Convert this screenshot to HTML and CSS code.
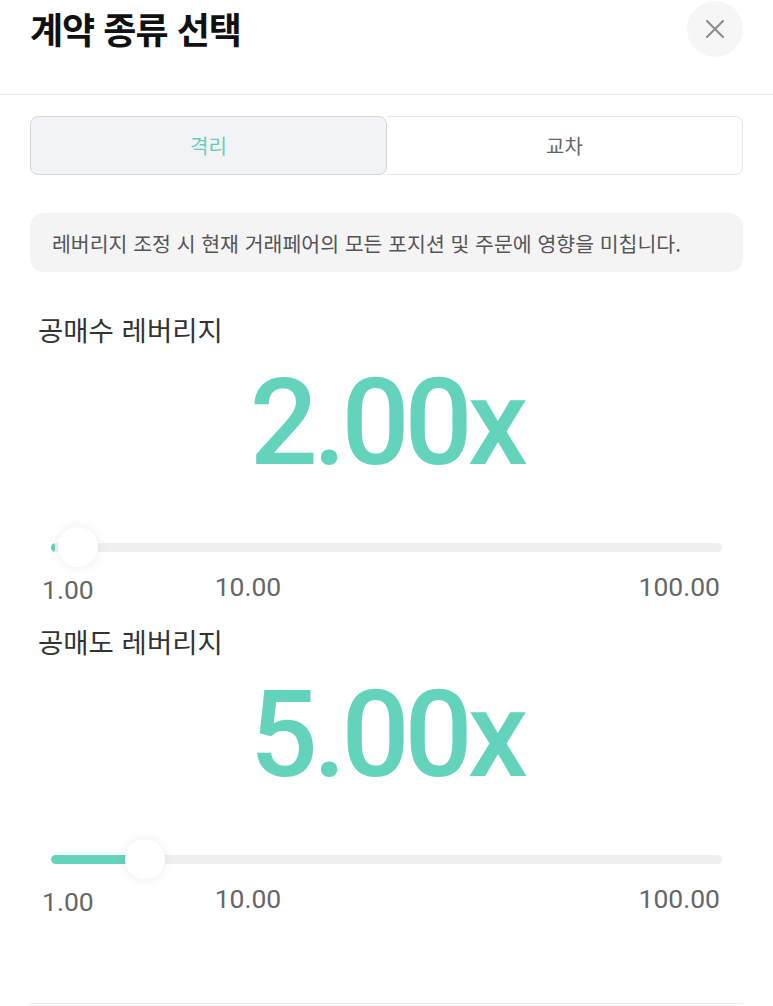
FILE: index.html
```html
<!DOCTYPE html>
<html lang="ko">
<head>
    <meta charset="UTF-8">
    <meta name="viewport" content="width=device-width, initial-scale=1.0">
    <title>계약 종류 선택</title>
    <link rel="stylesheet" href="styles.css">
</head>
<body>
    <header class="sheet-header">
        <h1>계약 종류 선택</h1>
        <button class="close-btn" aria-label="닫기">
            <svg width="18" height="18" viewBox="0 0 18 18">
                <path d="M1 1 L17 17 M17 1 L1 17" stroke="#8a8a8a" stroke-width="2" stroke-linecap="round" fill="none"/>
            </svg>
        </button>
    </header>

    <div class="container">
        <div class="tabs">
            <button class="tab active">격리</button>
            <button class="tab">교차</button>
        </div>

        <div class="notice">레버리지 조정 시 현재 거래페어의 모든 포지션 및 주문에 영향을 미칩니다.</div>

        <!-- Long leverage -->
        <section class="leverage first">
            <div class="leverage-label">공매수 레버리지</div>
            <div class="leverage-value">2.00x</div>
            <div class="slider">
                <div class="track"><div class="fill" style="width: 4px;"></div></div>
                <div class="thumb" style="left: 7px;"></div>
            </div>
            <div class="scale">
                <span class="min">1.00</span>
                <span class="mid">10.00</span>
                <span class="max">100.00</span>
            </div>
        </section>

        <!-- Short leverage -->
        <section class="leverage">
            <div class="leverage-label">공매도 레버리지</div>
            <div class="leverage-value">5.00x</div>
            <div class="slider">
                <div class="track"><div class="fill" style="width: 80px;"></div></div>
                <div class="thumb" style="left: 74px;"></div>
            </div>
            <div class="scale">
                <span class="min">1.00</span>
                <span class="mid">10.00</span>
                <span class="max">100.00</span>
            </div>
        </section>

        <div class="sheet-footer"></div>
    </div>
</body>
</html>
```

FILE: styles.css
```css
* {
    margin: 0;
    padding: 0;
    box-sizing: border-box;
}

body {
    font-family: "Noto Sans CJK KR", "Noto Sans", sans-serif;
    background-color: #fff;
    color: #333;
}

.sheet-header {
    display: flex;
    justify-content: space-between;
    align-items: flex-start;
    height: 95px;
    padding: 1px 30px 0 30px;
    border-bottom: 1px solid #ececec;
}

.sheet-header h1 {
    font-size: 36px;
    font-weight: 700;
    line-height: 54px;
    color: #111;
    letter-spacing: -1px;
}

.close-btn {
    width: 56px;
    height: 56px;
    border: none;
    border-radius: 50%;
    background-color: #f6f6f6;
    display: flex;
    align-items: center;
    justify-content: center;
    cursor: pointer;
}

.container {
    padding: 0 30px;
}

.tabs {
    display: flex;
    margin-top: 21px;
    height: 59px;
}

.tab {
    flex: 1;
    font-family: "Noto Sans CJK KR", sans-serif;
    font-size: 20px;
    color: #666;
    background-color: #fff;
    border: 1px solid #e6e6e6;
    border-left: none;
    border-radius: 0 8px 8px 0;
    cursor: pointer;
}

.tab.active {
    color: #5fd0b7;
    background-color: #f2f3f5;
    border: 1.5px solid #d2d5d9;
    border-radius: 8px;
}

.notice {
    margin-top: 38px;
    height: 59px;
    display: flex;
    align-items: center;
    padding: 0 22px;
    background-color: #f4f4f5;
    border-radius: 14px;
    font-size: 20.5px;
    color: #555;
    white-space: nowrap;
}

.leverage {
    margin-top: 22px;
}

.leverage.first {
    margin-top: 40px;
}

.leverage-label {
    font-size: 27.5px;
    line-height: 34px;
    padding-left: 8px;
    color: #333;
}

.leverage-value {
    margin-top: 16px;
    font-family: Roboto, sans-serif;
    font-weight: 500;
    font-size: 120px;
    line-height: 122px;
    letter-spacing: -5px;
    text-align: center;
    color: #64d3bc;
}

.slider {
    position: relative;
    margin: 43px 21px 0 21px;
    height: 40px;
    display: flex;
    align-items: center;
}

.track {
    width: 100%;
    height: 9px;
    border-radius: 5px;
    background-color: #f0f0f0;
    overflow: hidden;
}

.fill {
    height: 100%;
    background-color: #64d3bc;
    border-radius: 5px;
}

.thumb {
    position: absolute;
    top: 0;
    width: 40px;
    height: 40px;
    border-radius: 50%;
    background-color: #fff;
    box-shadow: 0 0 12px rgba(0, 0, 0, 0.08);
}

.scale {
    display: flex;
    align-items: flex-start;
    height: 30px;
    margin-top: 5px;
    padding: 0 23px 0 12px;
    font-family: Roboto, sans-serif;
    font-size: 26.5px;
    line-height: 30px;
    color: #666;
}

.scale .min {
    margin-top: 3px;
}

.scale .mid {
    margin-left: 121px;
}

.scale .max {
    margin-left: auto;
}

.sheet-footer {
    margin-top: 89px;
    border-top: 1px solid #ececec;
}
```
